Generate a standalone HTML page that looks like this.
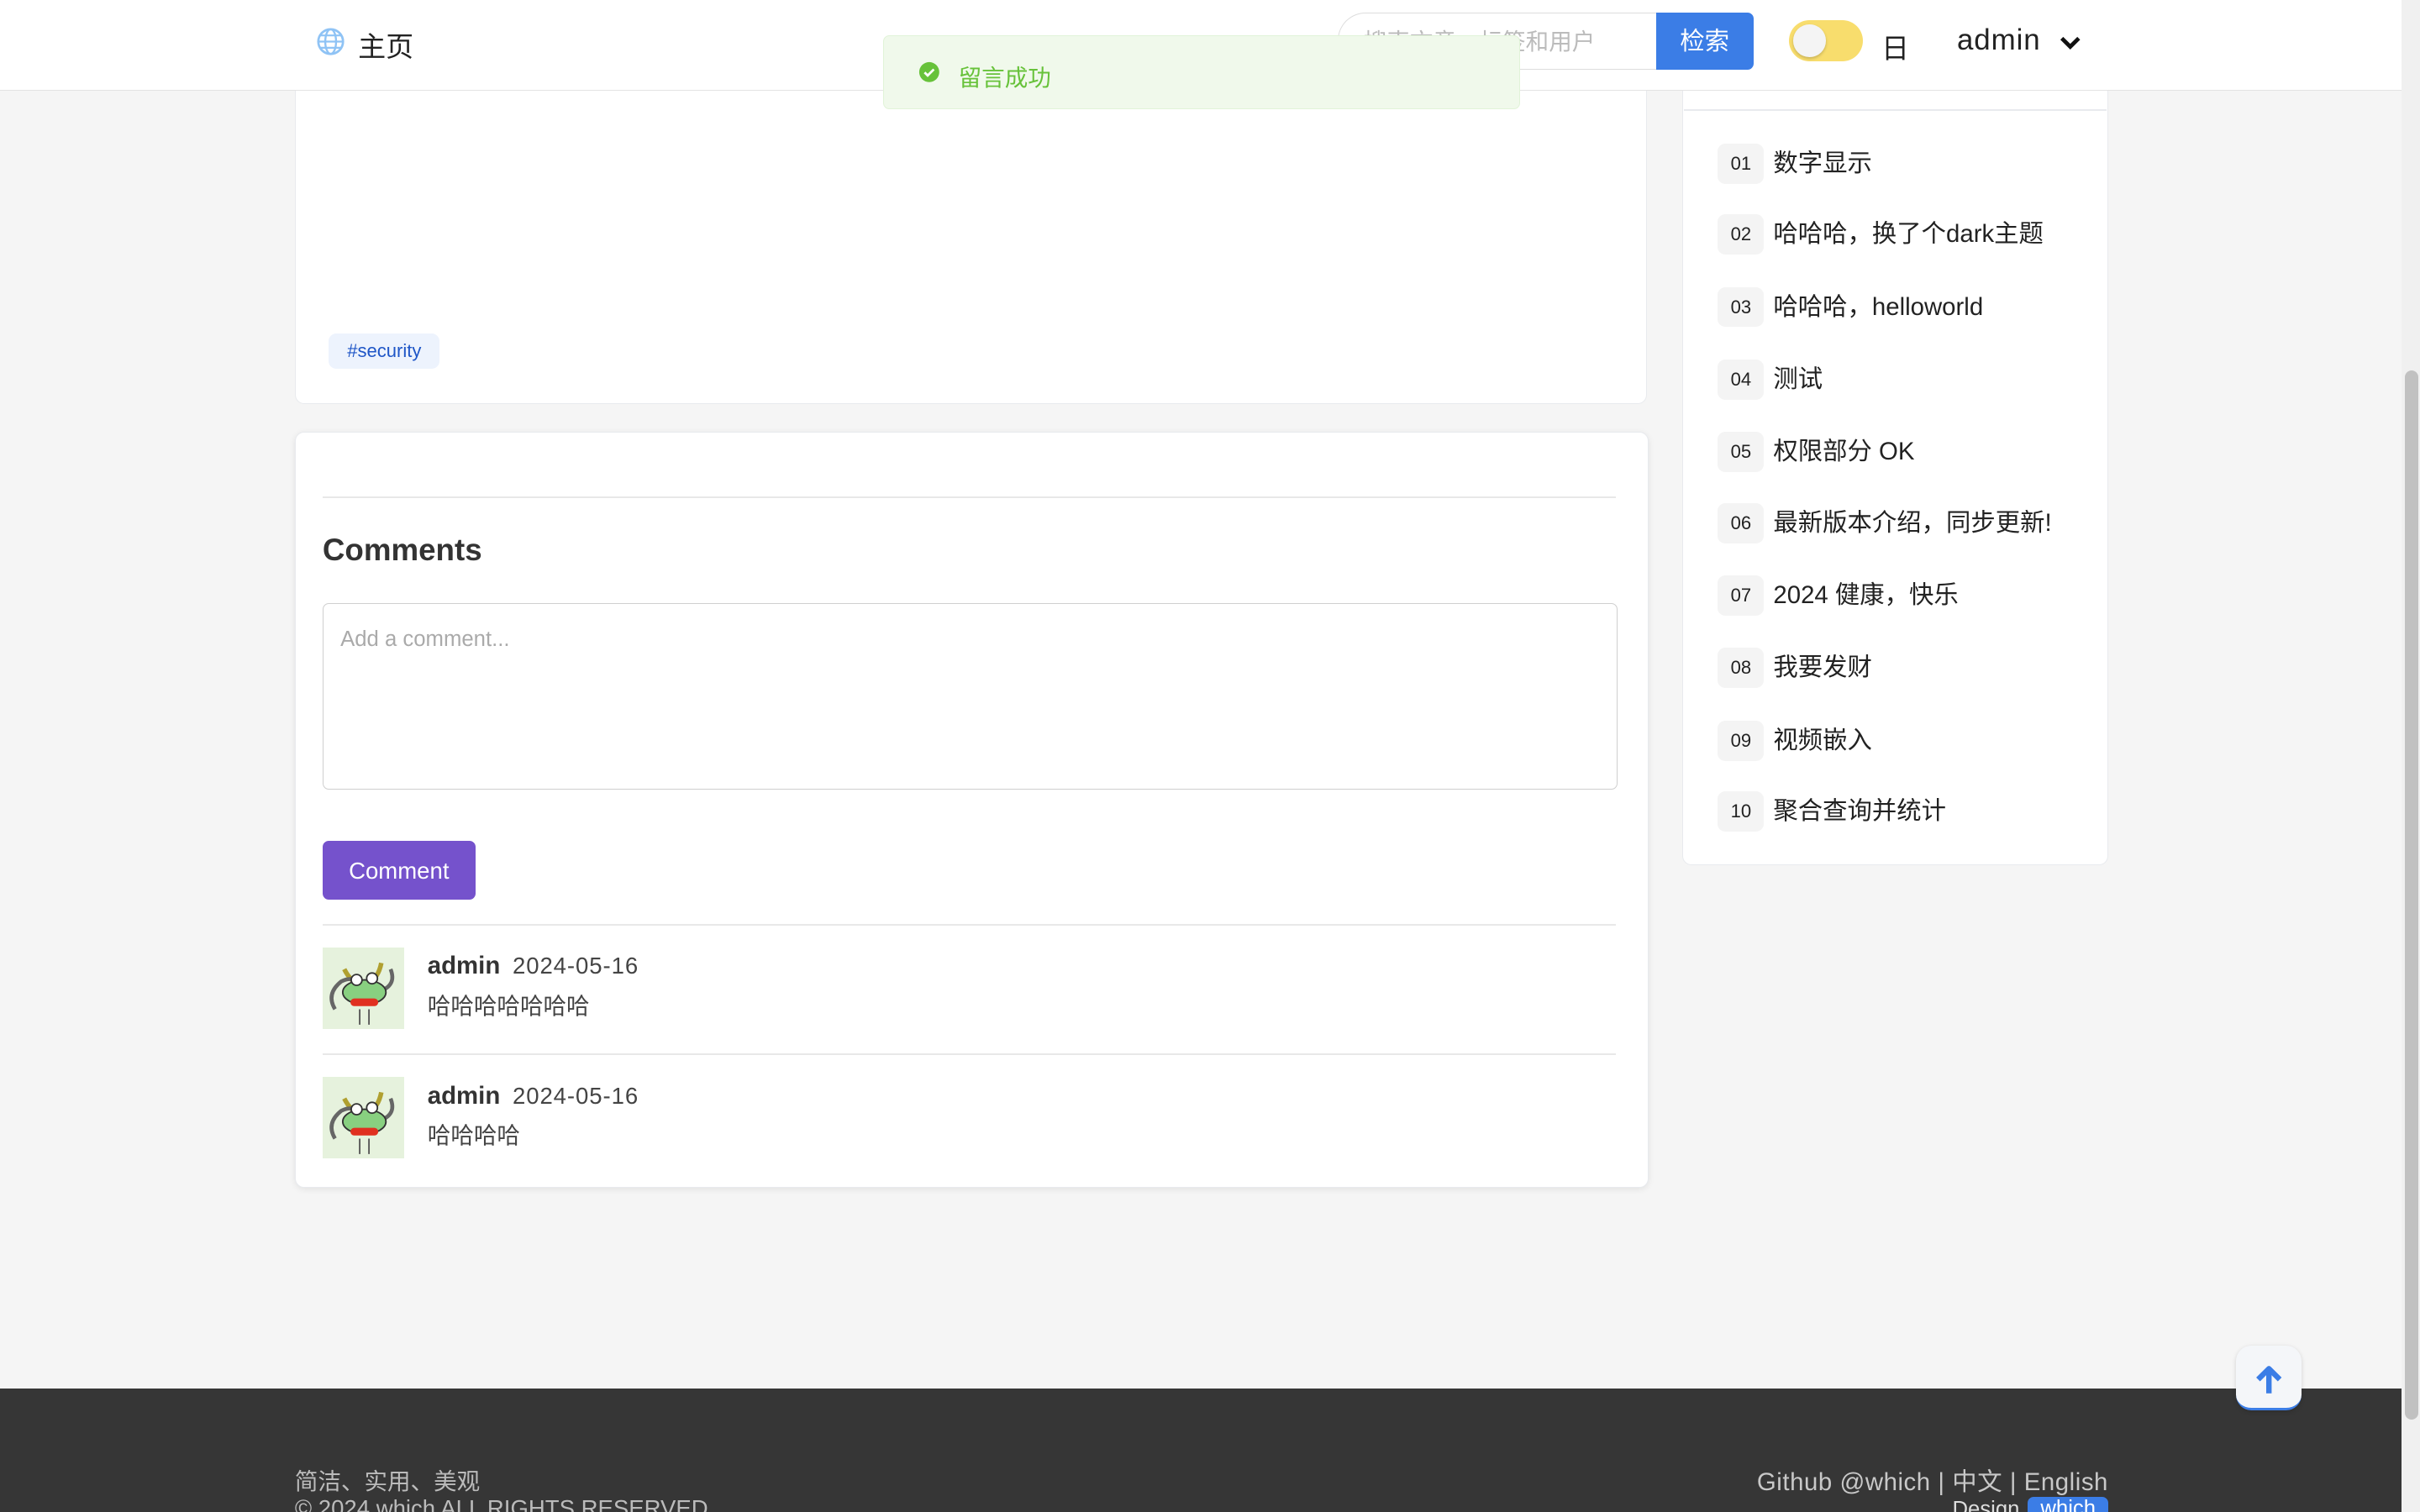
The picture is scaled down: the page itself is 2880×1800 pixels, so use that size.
<!DOCTYPE html>
<html><head><meta charset="utf-8"><style>
*{box-sizing:border-box;margin:0;padding:0}
html,body{width:2880px;height:1800px;overflow:hidden}
body{background:#f5f5f5;font-family:"Liberation Sans","Noto Sans CJK SC",sans-serif;color:#222}
#r{zoom:1.836735;width:1568px;height:980px;position:relative;overflow:hidden;background:#f5f5f5}
.a{position:absolute}
.card{background:#fff;border:1px solid #e8eaee;border-radius:6px}
.item{position:absolute;left:1113px;font-size:16px;color:#222;height:26px;line-height:26px}
.item b{display:inline-block;width:30px;height:26px;background:#f4f4f4;border-radius:5px;text-align:center;font-weight:normal;font-size:12px;margin-right:6px;vertical-align:top}
.hr{position:absolute;left:209px;width:838px;height:1px;background:#e8e8e8}
.nm{font-weight:bold;font-size:16px;color:#333}
.dt{font-size:15px;color:#444;margin-left:8px;letter-spacing:.5px}
.tx{font-size:15px;color:#444;margin-top:4px}
</style></head><body><div id="r">
<div class="a card" style="left:191px;top:40px;width:876px;height:222px;border-top:none;border-radius:0 0 6px 6px"></div>
<div class="a" style="left:213px;top:216px;width:72px;height:23px;background:#edf3fd;border-radius:5px;color:#1f56c7;font-size:12px;text-align:center;line-height:23px">#security</div>

<div class="a card" style="left:191px;top:280px;width:877px;height:490px;box-shadow:0 1px 4px rgba(0,0,0,.08)"></div>
<div class="hr" style="top:322px"></div>
<div class="a" style="left:209px;top:345px;font-size:20px;font-weight:bold;color:#333">Comments</div>
<div class="a" style="left:209px;top:391px;width:839px;height:121px;border:1px solid #cfcfcf;border-radius:4px;font-size:14px;color:#aaa;padding:15px 11px">Add a comment...</div>
<div class="a" style="left:209px;top:545px;width:99px;height:38px;background:#7552cc;border-radius:4px;color:#fff;font-size:15px;text-align:center;line-height:39px">Comment</div>
<div class="hr" style="top:599px"></div>
<div class="hr" style="top:683px"></div>
<svg class="a" style="left:209px;top:614px" width="53" height="53" viewBox="0 0 53 53"><rect width="53" height="53" fill="#e6f2dd"/><path d="M14 14q4 8 10 10M38 10q-2 10-8 12" stroke="#b0a030" stroke-width="3" fill="none"/><path d="M8 40q-6-10 4-18 8-4 12 2M44 14q4 10-6 14" stroke="#666" stroke-width="2.5" fill="none"/><ellipse cx="27" cy="29" rx="14" ry="8" fill="#88d080" stroke="#333"/><circle cx="22" cy="21" r="3.5" fill="#fff" stroke="#333"/><circle cx="32" cy="20" r="3.5" fill="#fff" stroke="#333"/><rect x="18" y="33" width="18" height="5" rx="2.5" fill="#e03020"/><path d="M24 40v10M30 40v10" stroke="#555"/></svg>
<div class="a" style="left:277px;top:617px"><span class="nm">admin</span><span class="dt">2024-05-16</span><div class="tx">哈哈哈哈哈哈哈</div></div>
<svg class="a" style="left:209px;top:698px" width="53" height="53" viewBox="0 0 53 53"><rect width="53" height="53" fill="#e6f2dd"/><path d="M14 14q4 8 10 10M38 10q-2 10-8 12" stroke="#b0a030" stroke-width="3" fill="none"/><path d="M8 40q-6-10 4-18 8-4 12 2M44 14q4 10-6 14" stroke="#666" stroke-width="2.5" fill="none"/><ellipse cx="27" cy="29" rx="14" ry="8" fill="#88d080" stroke="#333"/><circle cx="22" cy="21" r="3.5" fill="#fff" stroke="#333"/><circle cx="32" cy="20" r="3.5" fill="#fff" stroke="#333"/><rect x="18" y="33" width="18" height="5" rx="2.5" fill="#e03020"/><path d="M24 40v10M30 40v10" stroke="#555"/></svg>
<div class="a" style="left:277px;top:701px"><span class="nm">admin</span><span class="dt">2024-05-16</span><div class="tx">哈哈哈哈</div></div>

<div class="a card" style="left:1090px;top:40px;width:276px;height:521px;border-top:none;border-radius:0 0 6px 6px"></div>
<div class="a" style="left:1091px;top:71px;width:274px;height:1px;background:#e8eaee"></div>
<div class="item" style="top:93px"><b>01</b>数字显示</div>
<div class="item" style="top:139px"><b>02</b>哈哈哈，换了个dark主题</div>
<div class="item" style="top:186px"><b>03</b>哈哈哈，helloworld</div>
<div class="item" style="top:233px"><b>04</b>测试</div>
<div class="item" style="top:280px"><b>05</b>权限部分 OK</div>
<div class="item" style="top:326px"><b>06</b>最新版本介绍，同步更新!</div>
<div class="item" style="top:373px"><b>07</b>2024 健康，快乐</div>
<div class="item" style="top:420px"><b>08</b>我要发财</div>
<div class="item" style="top:467px"><b>09</b>视频嵌入</div>
<div class="item" style="top:513px"><b>10</b>聚合查询并统计</div>

<div class="a" style="left:0;top:0;width:1556px;height:59px;background:#fff;border-bottom:1px solid #e3e3e3"></div>
<svg class="a" style="left:205px;top:18px" width="18" height="18" viewBox="0 0 18 18"><circle cx="9" cy="9" r="8" fill="none" stroke="#8fc3f5" stroke-width="1.5"/><ellipse cx="9" cy="9" rx="3.5" ry="8" fill="none" stroke="#8fc3f5" stroke-width="1.3"/><path d="M1 9h16M2.5 5h13M2.5 13h13" stroke="#8fc3f5" stroke-width="1.2"/></svg>
<div class="a" style="left:232px;top:16px;font-size:18px">主页</div>
<div class="a" style="left:867px;top:8px;width:207px;height:37px;border:1px solid #ddd;border-right:none;border-radius:18px 0 0 18px;background:#fff;font-size:15px;color:#bbb;line-height:37px;padding-left:16px">搜索文章、标签和用户</div>
<div class="a" style="left:1073px;top:8px;width:63px;height:37px;background:#3b7de6;border-radius:0 4px 4px 0;color:#fff;font-size:16px;text-align:center;line-height:38px">检索</div>
<div class="a" style="left:1159px;top:13px;width:48px;height:27px;background:#f8dd6d;border-radius:14px"></div>
<div class="a" style="left:1162px;top:16px;width:21px;height:21px;background:#f4f4f4;border-radius:50%;box-shadow:0 1px 2px rgba(0,0,0,.2)"></div>
<div class="a" style="left:1219px;top:17px;font-size:18px">日</div>
<div class="a" style="left:1268px;top:15px;font-size:19px;letter-spacing:.5px">admin</div>
<svg class="a" style="left:1334px;top:22px" width="15" height="12" viewBox="0 0 15 12"><path d="M2 3l5.5 5.5L13 3" fill="none" stroke="#111" stroke-width="2.6"/></svg>

<div class="a" style="left:572px;top:23px;width:413px;height:48px;background:#f0f9eb;border:1px solid #e1f3d8;border-radius:4px"></div>
<svg class="a" style="left:595px;top:40px" width="14" height="14" viewBox="0 0 14 14"><circle cx="7" cy="7" r="6.5" fill="#67c23a"/><path d="M4 7.2l2 2 4-4" stroke="#fff" stroke-width="1.5" fill="none"/></svg>
<div class="a" style="left:621px;top:38px;font-size:15px;color:#67c23a">留言成功</div>

<div class="a" style="left:0;top:900px;width:1556px;height:80px;background:#363636"></div>
<div class="a" style="left:191px;top:948px;font-size:15px;color:#bbb">简洁、实用、美观</div>
<div class="a" style="left:191px;top:969px;font-size:15px;color:#bbb">© 2024 which ALL RIGHTS RESERVED</div>
<div class="a" style="left:1134px;top:948px;width:232px;font-size:16px;color:#c8c8c8;text-align:right;letter-spacing:.3px">Github @which | 中文 | English</div>
<div class="a" style="left:1265px;top:971px;font-size:14px;color:#ddd">Design</div>
<div class="a" style="left:1314px;top:970px;width:52px;height:20px;background:#3b7de6;border-radius:4px;color:#fff;font-size:14px;text-align:center">which</div>

<div class="a" style="left:1449px;top:872px;width:42px;height:42px;background:#f4f6f9;border-radius:10px;border-bottom:2px solid #3b7de6;box-shadow:0 1px 3px rgba(0,0,0,.15)"></div>
<svg class="a" style="left:1459px;top:883px" width="22" height="22" viewBox="0 0 22 22"><path d="M11 20V5M4 11l7-7 7 7" stroke="#3b7de6" stroke-width="3.5" fill="none" stroke-linejoin="round"/></svg>

<div class="a" style="left:1556px;top:0;width:12px;height:980px;background:#f0f0f0"></div>
<div class="a" style="left:1558px;top:240px;width:9px;height:680px;background:#c1c1c1;border-radius:5px"></div>
</div></body></html>
